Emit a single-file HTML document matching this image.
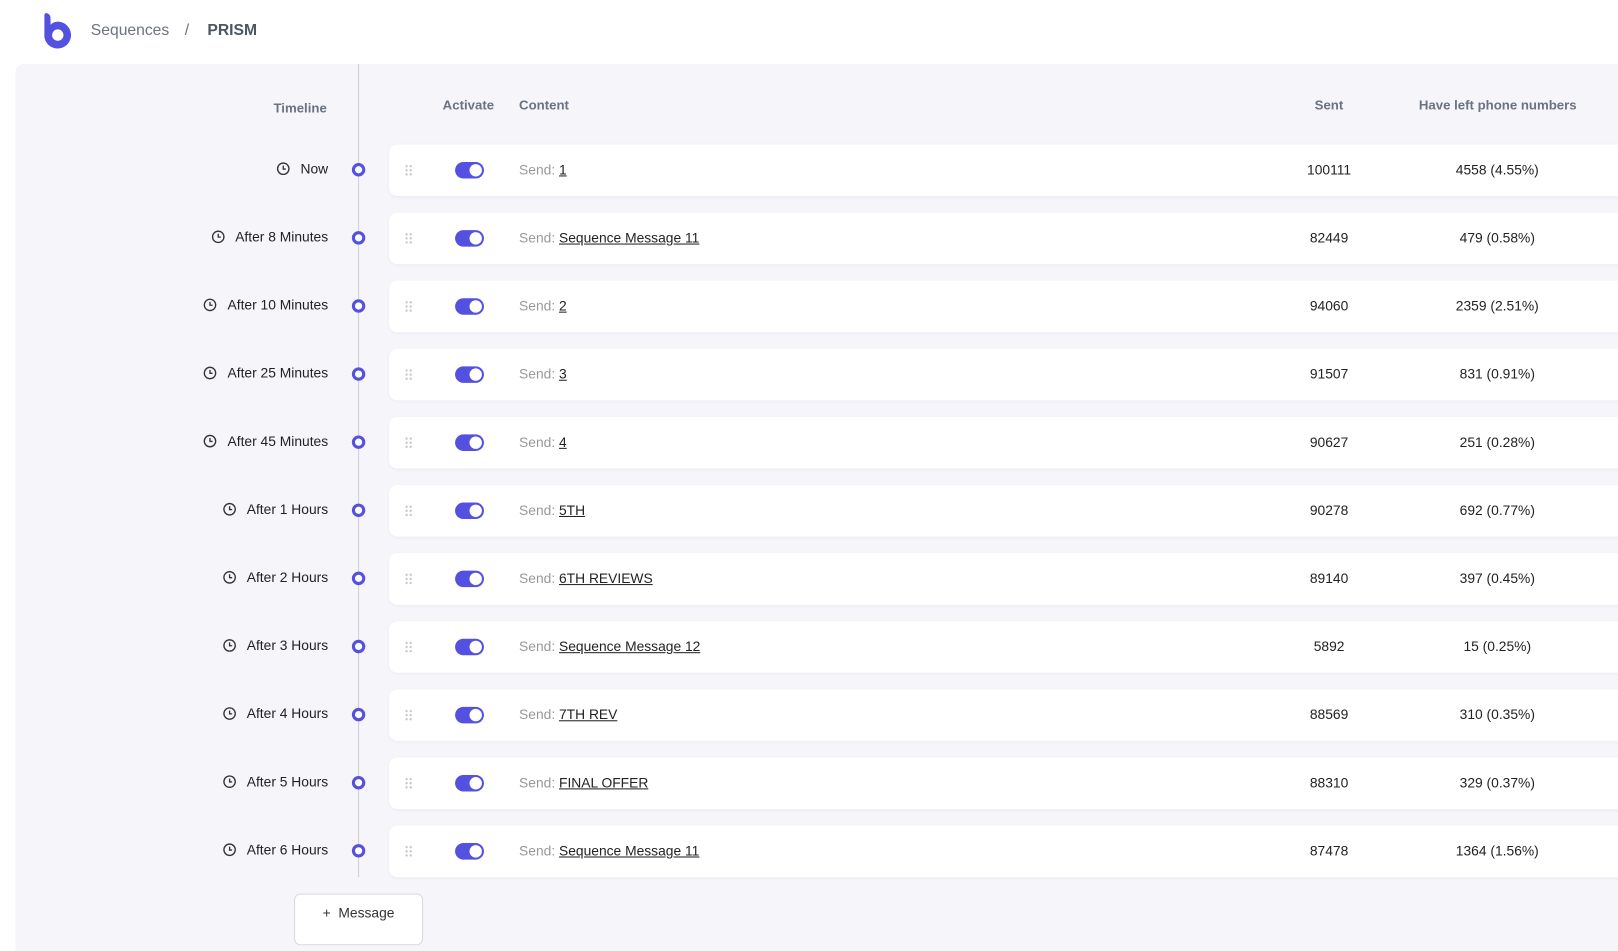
<!DOCTYPE html>
<html><head><meta charset="utf-8"><style>
*{box-sizing:border-box;margin:0;padding:0}
body{width:1618px;height:910px;overflow:hidden;background:#fff;font-family:"Liberation Sans",sans-serif;font-size:13.4px;color:#222;position:relative}
#wrap{position:absolute;left:0;top:0;width:1568px;height:882px;transform:scale(1.0319);transform-origin:0 0}
.abs{position:absolute}
.panel{left:15px;top:62px;width:1560px;height:860px;background:#f5f5fa;border-radius:8px 0 0 0}
.vline{left:347px;top:62px;width:1px;height:788px;background:#cfcfd8}
.hdr{color:#6b7280;font-weight:bold;font-size:12.8px;top:94px}
.card{left:377px;width:1200px;height:50px;background:#fff;border-radius:8px 0 0 8px;box-shadow:0 1px 3px rgba(0,0,0,0.04)}
.lbl{right:1250px;width:200px;text-align:right;white-space:nowrap}
.lbl svg{vertical-align:-2px;margin-right:10px}
.dot{left:341px;width:13px;height:13px;border:3px solid #5451e0;border-radius:50%;background:#fff}
.tog{left:441px;width:28px;height:16px;background:#5451e0;border-radius:8px}
.tog::after{content:"";position:absolute;right:2px;top:2px;width:12px;height:12px;border-radius:50%;background:#fff}
.drag{left:392px;width:8px;height:12px;background-image:radial-gradient(circle,#c8c8d0 1px,transparent 1.2px);background-size:4px 4px}
.send{left:503px;color:#999}
.send a{color:#222;text-decoration:underline}
.num{width:120px;text-align:center}
</style></head><body><div id="wrap">
<svg class="abs" style="left:40px;top:12px" width="30" height="36" viewBox="0 0 30 36"><path d="M3 3 Q3 0 6 1 Q9 2 9 6 L9 12 Q12 9 16 9 A13 13 0 1 1 3 24 Z" fill="#5451e0"/><circle cx="16" cy="22" r="5.5" fill="#fff"/></svg>
<div class="abs" style="left:88px;top:21px;font-size:15.2px;color:#6b7280">Sequences</div>
<div class="abs" style="left:179px;top:21px;font-size:15.2px;color:#6b7280">/</div>
<div class="abs" style="left:201px;top:21px;font-size:15.2px;color:#4b5563;font-weight:bold">PRISM</div>
<div class="abs panel"></div>
<div class="abs vline"></div>
<div class="abs hdr" style="left:265px;top:97px">Timeline</div>
<div class="abs hdr" style="left:429px">Activate</div>
<div class="abs hdr" style="left:503px">Content</div>
<div class="abs hdr" style="left:1274px">Sent</div>
<div class="abs hdr" style="left:1375px">Have left phone numbers</div>
<div id="rows"></div>
<div class="abs" style="left:285px;top:866px;width:125px;height:50px;background:#fff;border:1px solid #d8d8e0;border-radius:6px;text-align:center;padding-top:10px;color:#333">+&nbsp;&nbsp;Message</div>
</div>
<script>
var d=[["Now","1","100111","4558 (4.55%)"],["After 8 Minutes","Sequence Message 11","82449","479 (0.58%)"],["After 10 Minutes","2","94060","2359 (2.51%)"],["After 25 Minutes","3","91507","831 (0.91%)"],["After 45 Minutes","4","90627","251 (0.28%)"],["After 1 Hours","5TH","90278","692 (0.77%)"],["After 2 Hours","6TH REVIEWS","89140","397 (0.45%)"],["After 3 Hours","Sequence Message 12","5892","15 (0.25%)"],["After 4 Hours","7TH REV","88569","310 (0.35%)"],["After 5 Hours","FINAL OFFER","88310","329 (0.37%)"],["After 6 Hours","Sequence Message 11","87478","1364 (1.56%)"]];
var h="",clk='<svg width="13" height="13" viewBox="0 0 13 13"><circle cx="6.5" cy="6.5" r="5.5" fill="none" stroke="#333" stroke-width="1.3"/><path d="M6.5 3.5V6.8H9" fill="none" stroke="#333" stroke-width="1.3"/></svg>';
d.forEach(function(r,i){var c=165+66*i;
h+='<div class="abs card" style="top:'+(c-25)+'px"></div>';
h+='<div class="abs lbl" style="top:'+(c-9)+'px">'+clk+r[0]+'</div>';
h+='<div class="abs dot" style="top:'+(c-7)+'px"></div>';
h+='<div class="abs drag" style="top:'+(c-6)+'px"></div>';
h+='<div class="abs tog" style="top:'+(c-8)+'px"></div>';
h+='<div class="abs send" style="top:'+(c-8)+'px">Send: <a>'+r[1]+'</a></div>';
h+='<div class="abs num" style="left:1228px;top:'+(c-8)+'px">'+r[2]+'</div>';
h+='<div class="abs num" style="left:1391px;top:'+(c-8)+'px">'+r[3]+'</div>';});
document.getElementById("rows").innerHTML=h;
</script>
</body></html>
